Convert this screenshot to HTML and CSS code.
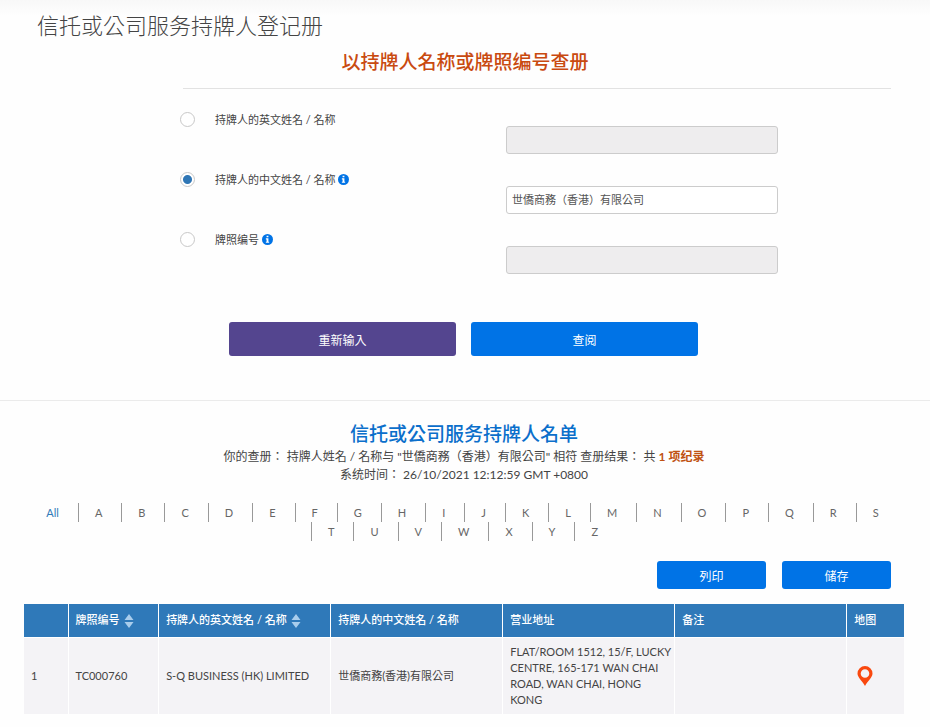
FILE: index.html
```html
<!DOCTYPE html>
<html lang="zh-Hant">
<head>
    <meta charset="UTF-8">
    <meta name="viewport" content="width=device-width, initial-scale=1.0">
    <title>信托或公司服务持牌人登记册</title>
    <link rel="stylesheet" href="styles.css">
</head>
<body>
    <!-- Icons used more than once -->
    <svg class="sprite" aria-hidden="true">
        <symbol id="icon-info" viewBox="0 0 12 12">
            <circle cx="6" cy="6" r="6" fill="#0073e6"/>
            <path d="M5 2h2v1.6H5zM4.2 4.7H7v3.7h.8v1.2H4.2V8.4H5V5.9h-.8z" fill="#fff"/>
        </symbol>
        <symbol id="icon-sort" viewBox="0 0 10 14">
            <path d="M5 0l4.5 6h-9zM.5 8h9L5 14z" fill="#a9cdec"/>
        </symbol>
    </svg>

    <h1>信托或公司服务持牌人登记册</h1>

    <!-- Search form -->
    <form class="search">
        <h2 class="search-title">以持牌人名称或牌照编号查册</h2>
        <hr>
        <div class="fields">
            <div class="field">
                <input type="radio" name="search-by" id="by-english">
                <label for="by-english">持牌人的英文姓名 / 名称</label>
                <input type="text" class="text" aria-label="持牌人的英文姓名 / 名称" disabled>
            </div>
            <div class="field">
                <input type="radio" name="search-by" id="by-chinese" checked>
                <label for="by-chinese">持牌人的中文姓名 / 名称 <svg class="info"><use href="#icon-info"/></svg></label>
                <input type="text" class="text" aria-label="持牌人的中文姓名 / 名称" value="世僑商務（香港）有限公司">
            </div>
            <div class="field">
                <input type="radio" name="search-by" id="by-number">
                <label for="by-number">牌照编号 <svg class="info"><use href="#icon-info"/></svg></label>
                <input type="text" class="text" aria-label="牌照编号" disabled>
            </div>
        </div>
        <div class="actions">
            <button type="reset" class="reset">重新输入</button>
            <button type="button">查阅</button>
        </div>
    </form>

    <!-- Results -->
    <section class="results">
        <h2>信托或公司服务持牌人名单</h2>
        <p>你的查册： 持牌人姓名 / 名称与 "世僑商務（香港）有限公司" 相符 查册结果： 共 <strong>1 项纪录</strong></p>
        <p>系统时间： 26/10/2021 12:12:59 GMT +0800</p>

        <nav class="letters">
            <a href="#" class="current">All</a>
            <a href="#">A</a>
            <a href="#">B</a>
            <a href="#">C</a>
            <a href="#">D</a>
            <a href="#">E</a>
            <a href="#">F</a>
            <a href="#">G</a>
            <a href="#">H</a>
            <a href="#">I</a>
            <a href="#">J</a>
            <a href="#">K</a>
            <a href="#">L</a>
            <a href="#">M</a>
            <a href="#">N</a>
            <a href="#">O</a>
            <a href="#">P</a>
            <a href="#">Q</a>
            <a href="#">R</a>
            <a href="#">S</a>
            <a href="#">T</a>
            <a href="#">U</a>
            <a href="#">V</a>
            <a href="#">W</a>
            <a href="#">X</a>
            <a href="#">Y</a>
            <a href="#">Z</a>
        </nav>

        <div class="export">
            <button type="button">列印</button>
            <button type="button">储存</button>
        </div>

        <table>
            <thead>
                <tr>
                    <th class="col-index"></th>
                    <th class="col-number">牌照编号 <svg class="sort"><use href="#icon-sort"/></svg></th>
                    <th>持牌人的英文姓名 / 名称 <svg class="sort"><use href="#icon-sort"/></svg></th>
                    <th>持牌人的中文姓名 / 名称</th>
                    <th>营业地址</th>
                    <th>备注</th>
                    <th class="col-map">地图</th>
                </tr>
            </thead>
            <tbody>
                <tr>
                    <td>1</td>
                    <td>TC000760</td>
                    <td>S-Q BUSINESS (HK) LIMITED</td>
                    <td>世僑商務(香港)有限公司</td>
                    <td>FLAT/ROOM 1512, 15/F, LUCKY<br>CENTRE, 165-171 WAN CHAI<br>ROAD, WAN CHAI, HONG<br>KONG</td>
                    <td></td>
                    <td>
                        <a href="#" aria-label="地图">
                            <svg class="pin" viewBox="0 0 16 20">
                                <path fill-rule="evenodd" d="M8 0a7.5 7.5 0 0 1 7.5 7.5C15.5 11.5 11 14.5 8 20 5 14.5.5 11.5.5 7.5A7.5 7.5 0 0 1 8 0zm0 3.2a4.3 4.3 0 1 0 0 8.6 4.3 4.3 0 0 0 0-8.6z" fill="#f9480f"/>
                            </svg>
                        </a>
                    </td>
                </tr>
            </tbody>
        </table>
    </section>
</body>
</html>
```
FILE: styles.css
```css
* {
    box-sizing: border-box;
}
body {
    margin: 0;
    font-family: Lato, "Noto Sans CJK TC", sans-serif;
    font-size: 11px;
    line-height: 16px;
    color: #444;
    background: #fefefe linear-gradient(#f8f8f8, #fefefe) no-repeat 0 0 / 100% 16px;
}
.sprite {
    display: none;
}
h1 {
    margin: 0;
    padding: 12px 37px 0;
    font-size: 22px;
    font-weight: 300;
    line-height: 28px;
}
h2 {
    margin: 0;
    font-size: 19px;
    font-weight: 500;
    line-height: 28px;
    text-align: center;
    color: #0b6fcb;
}
hr {
    margin: 12px 39px 0 183px;
    border: 0;
    border-top: 1px solid #e2e2e2;
}
button {
    border: 0;
    border-radius: 3px;
    padding: 0;
    font-family: inherit;
    font-size: 12px;
    color: #fff;
    background: #0073e6;
    cursor: pointer;
}

/* Search form */
.search {
    padding: 8px 0 44px;
    border-bottom: 1px solid #ebebeb;
}
.search-title {
    color: #c94a10;
}
.fields {
    display: grid;
    gap: 18px;
    padding: 23px 152px 0 180px;
}
.field {
    display: grid;
    grid-template-columns: 35px 291fr 272fr;
    align-items: start;
}
.field input[type="radio"] {
    appearance: none;
    width: 15px;
    height: 15px;
    margin: 0;
    border: 1px solid #c8c8c8;
    border-radius: 50%;
    background: #fff;
}
.field input[type="radio"]:checked {
    background: radial-gradient(circle, #2f76b5 4px, #fff 5px);
}
.field .text {
    width: 100%;
    height: 28px;
    margin-top: 14px;
    padding: 0 5px 2px;
    border: 1px solid #ccc;
    border-radius: 3px;
    font-family: inherit;
    font-size: 11px;
    color: #555;
    background: #fff;
}
.field .text:disabled {
    background: #eeedee;
}
.info {
    width: 11px;
    height: 11px;
    vertical-align: -1px;
}
.actions {
    display: flex;
    gap: 15px;
    padding: 48px 232px 0 229px;
}
.actions button {
    flex: 1;
    height: 34px;
}
.actions .reset {
    background: #54458f;
}

/* Results */
.results {
    padding: 19px 26px 13px 24px;
}
.results p {
    margin: 0;
    font-size: 12px;
    line-height: 18px;
    text-align: center;
}
.results strong {
    color: #c05212;
}
.letters {
    display: flex;
    flex-wrap: wrap;
    justify-content: center;
    padding-top: 19px;
}
.letters a {
    padding: 0 19px 0 16px;
    border-left: 1px solid #999;
    line-height: 19px;
    color: #666;
    text-decoration: none;
}
.letters .current {
    border-left: 0;
    color: #2f7ab8;
}
.export {
    display: flex;
    justify-content: flex-end;
    gap: 16px;
    padding: 20px 13px 15px 0;
}
.export button {
    width: 109px;
    height: 28px;
}

/* Licensee table */
table {
    width: 100%;
    border-collapse: collapse;
    table-layout: fixed;
}
th, td {
    padding: 6px 0 6px 7px;
    text-align: left;
    border-left: 1px solid #fff;
}
th {
    height: 33px;
    font-weight: 500;
    color: #fff;
    background: #2f79b9;
}
td {
    height: 77px;
    border-top: 1px solid #fff;
    background: #f4f3f6;
}
th:first-child, td:first-child {
    border-left: 0;
}
.col-index {
    width: 5%;
}
.col-number {
    width: 10.3%;
}
.col-map {
    width: 6.5%;
}
.sort {
    width: 10px;
    height: 14px;
    margin-left: 2px;
    vertical-align: -4px;
}
.pin {
    display: block;
    width: 16px;
    height: 20px;
    margin-left: 3px;
}
```
